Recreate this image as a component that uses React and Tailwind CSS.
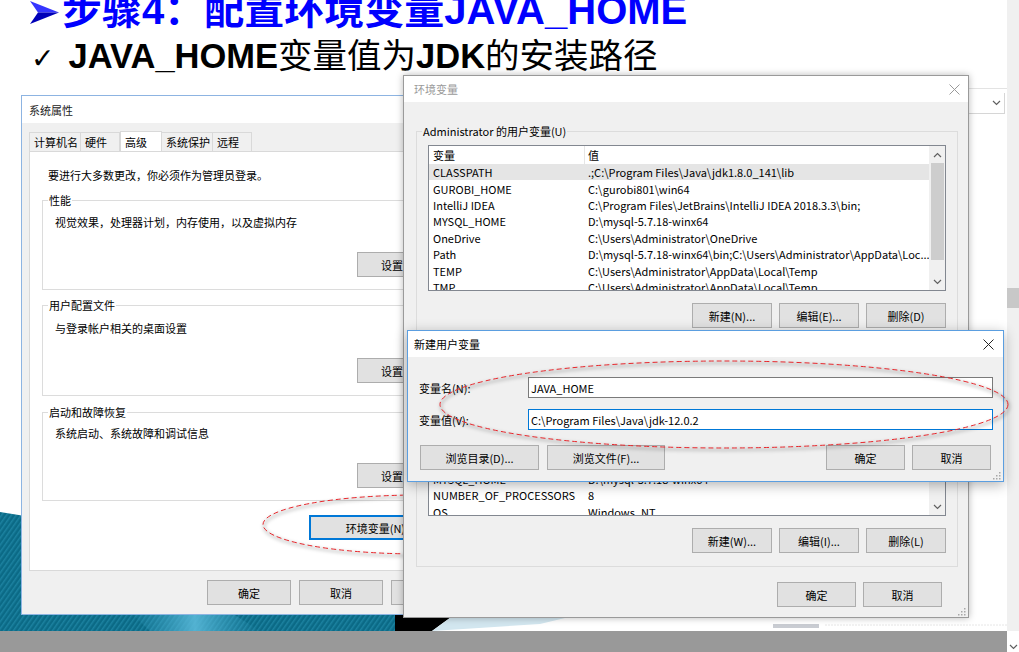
import React from "react";

const UI = "font-['Noto_Sans_CJK_SC','Noto_Sans',sans-serif]";

function Btn({ className = "", focus = false, children }) {
  return (
    <div
      className={`flex h-[25px] shrink-0 items-center justify-center whitespace-nowrap bg-[#e1e1e1] text-[11px] leading-[16px] text-black ${
        focus ? "border-2 border-[#0078d7]" : "border border-[#adadad]"
      } ${className}`}
    >
      {children}
    </div>
  );
}

function CloseX({ color = "#222" }) {
  return (
    <svg width="11" height="11" viewBox="0 0 11 11">
      <path d="M0.5 0.5 L10.5 10.5 M10.5 0.5 L0.5 10.5" stroke={color} strokeWidth="1" fill="none" />
    </svg>
  );
}

function Chevron({ up = false }) {
  return (
    <svg width="9" height="6" viewBox="0 0 9 6">
      <path
        d={up ? "M1 5 L4.5 1.5 L8 5" : "M1 1 L4.5 4.5 L8 1"}
        stroke="#606060"
        strokeWidth="1.2"
        fill="none"
      />
    </svg>
  );
}

function Grip() {
  return (
    <svg width="8" height="8" viewBox="0 0 8 8" fill="#a8a8a8">
      <rect x="6" y="0" width="1.5" height="1.5" />
      <rect x="3" y="3" width="1.5" height="1.5" />
      <rect x="6" y="3" width="1.5" height="1.5" />
      <rect x="0" y="6" width="1.5" height="1.5" />
      <rect x="3" y="6" width="1.5" height="1.5" />
      <rect x="6" y="6" width="1.5" height="1.5" />
    </svg>
  );
}

function ArrowBullet() {
  return (
    <svg width="29" height="23" viewBox="0 0 29 23" className="mr-[3px] shrink-0">
      <polygon points="0,0 29,11.5 8,11.5" fill="#3535ff" />
      <polygon points="8,11.5 29,11.5 0,23" fill="#0000b8" />
    </svg>
  );
}

const userVars = [
  ["CLASSPATH", ".;C:\\Program Files\\Java\\jdk1.8.0_141\\lib"],
  ["GUROBI_HOME", "C:\\gurobi801\\win64"],
  ["IntelliJ IDEA", "C:\\Program Files\\JetBrains\\IntelliJ IDEA 2018.3.3\\bin;"],
  ["MYSQL_HOME", "D:\\mysql-5.7.18-winx64"],
  ["OneDrive", "C:\\Users\\Administrator\\OneDrive"],
  ["Path", "D:\\mysql-5.7.18-winx64\\bin;C:\\Users\\Administrator\\AppData\\Loc..."],
  ["TEMP", "C:\\Users\\Administrator\\AppData\\Local\\Temp"],
  ["TMP", "C:\\Users\\Administrator\\AppData\\Local\\Temp"],
];

const sysVars = [
  ["MYSQL_HOME", "D:\\mysql-5.7.18-winx64"],
  ["NUMBER_OF_PROCESSORS", "8"],
  ["OS", "Windows_NT"],
];

function Row({ name, value, selected }) {
  return (
    <div
      className={`flex h-[16.4px] shrink-0 items-center whitespace-nowrap text-[11px] leading-[16px] ${
        selected ? "bg-[#e5e5e5]" : ""
      }`}
    >
      <div className="w-[156px] shrink-0 overflow-hidden pl-[4px]">{name}</div>
      <div className="min-w-0 flex-1 overflow-hidden pl-[3px]">{value}</div>
    </div>
  );
}

function GroupBox({ legend, className = "", children }) {
  return (
    <fieldset className={`min-w-0 border border-[#dcdcdc] ${className}`}>
      <legend className="ml-[5px] h-[16px] px-[1px] text-[11px] leading-[16px]">{legend}</legend>
      {children}
    </fieldset>
  );
}

function Tab({ className = "", children }) {
  return (
    <div className={`flex items-center whitespace-nowrap border border-b-0 border-[#d9d9d9] ${className}`}>
      {children}
    </div>
  );
}

function SystemProps() {
  return (
    <div className={`absolute left-[21px] top-[95px] flex h-[520px] w-[462px] flex-col border border-[#8db4e2] bg-[#f0f0f0] ${UI}`}>
      <div className="flex h-[27px] shrink-0 items-center bg-white pl-[7px] text-[11px] leading-[16px] text-[#222]">
        系统属性
      </div>
      <div className="flex flex-1 flex-col px-[7px] pt-[8px]">
        <div className="flex h-[20px] items-end text-[11px] leading-[16px]">
          <Tab className="h-[19px] w-[52px] pl-[4px]">计算机名</Tab>
          <Tab className="h-[19px] w-[39px] border-l-0 pl-[4px]">硬件</Tab>
          <Tab className="h-[20px] w-[42px] bg-white pl-[4px]">高级</Tab>
          <Tab className="h-[19px] w-[51px] border-l-0 pl-[4px]">系统保护</Tab>
          <Tab className="h-[19px] w-[39px] border-l-0 pl-[4px]">远程</Tab>
        </div>
        <div className="flex h-[420px] flex-col border border-[#d9d9d9] bg-white px-[12px]">
          <div className="mt-[15px] pl-[6px] text-[11px] leading-[16px]">要进行大多数更改，你必须作为管理员登录。</div>
          <GroupBox legend="性能" className="mt-[9px] h-[98px]">
            <div className="mt-[6px] pl-[12px] text-[11px] leading-[16px]">视觉效果，处理器计划，内存使用，以及虚拟内存</div>
            <div className="mr-[11px] mt-[22px] flex justify-end">
              <Btn className="w-[93px]">设置(S)...</Btn>
            </div>
          </GroupBox>
          <GroupBox legend="用户配置文件" className="mt-[7px] h-[99px]">
            <div className="mt-[7px] pl-[12px] text-[11px] leading-[16px]">与登录帐户相关的桌面设置</div>
            <div className="mr-[11px] mt-[22px] flex justify-end">
              <Btn className="w-[93px]">设置(E)...</Btn>
            </div>
          </GroupBox>
          <GroupBox legend="启动和故障恢复" className="mt-[8px] h-[97px]">
            <div className="mt-[5px] pl-[12px] text-[11px] leading-[16px]">系统启动、系统故障和调试信息</div>
            <div className="mr-[11px] mt-[22px] flex justify-end">
              <Btn className="w-[93px]">设置(T)...</Btn>
            </div>
          </GroupBox>
          <div className="mr-[11px] mt-[14px] flex justify-end">
            <Btn focus className="h-[25px] w-[142px]">环境变量(N)...</Btn>
          </div>
        </div>
        <div className="mt-[9px] flex justify-end gap-[8px]">
          <Btn className="w-[84px]">确定</Btn>
          <Btn className="w-[84px]">取消</Btn>
          <Btn className="w-[84px] text-[#8a8a8a]">应用(A)</Btn>
        </div>
      </div>
    </div>
  );
}

function ScrollBar({ thumb }) {
  return (
    <div className="flex w-[16px] shrink-0 flex-col items-center bg-[#f0f0f0]">
      <div className="flex h-[17px] items-center">
        <Chevron up />
      </div>
      <div className={`w-[13px] bg-[#cdcdcd] ${thumb}`} />
      <div className="flex-1" />
      <div className="flex h-[17px] items-center">
        <Chevron />
      </div>
    </div>
  );
}

function EnvVars() {
  return (
    <div className={`absolute left-[403px] top-[75px] flex h-[543px] w-[566px] flex-col border border-[#9a9a9a] bg-[#f0f0f0] shadow-[0_0_7px_rgba(0,0,0,0.28)] ${UI}`}>
      <div className="flex h-[26px] shrink-0 items-center justify-between bg-white pl-[10px] pr-[8px] text-[11px] leading-[16px] text-[#9a9a9a]">
        <span>环境变量</span>
        <CloseX color="#9a9a9a" />
      </div>
      <div className="flex flex-1 flex-col pl-[12px] pr-[10px]">
        <GroupBox legend="Administrator 的用户变量(U)" className="mt-[21px] h-[216px]">
          <div className="px-[11px]">
            <div className="mt-[6px] flex h-[146px] overflow-hidden border border-[#828790] bg-white">
              <div className="min-w-0 flex-1">
                <div className="flex h-[18px] items-center text-[11px] leading-[16px]">
                  <div className="flex h-full w-[156px] items-center border-r border-[#e5e5e5] pl-[4px]">变量</div>
                  <div className="pl-[3px]">值</div>
                </div>
                {userVars.map((r, i) => (
                  <Row key={r[0]} name={r[0]} value={r[1]} selected={i === 0} />
                ))}
              </div>
              <ScrollBar thumb="h-[97px]" />
            </div>
            <div className="mt-[12px] flex justify-end gap-[7px]">
              <Btn className="w-[80px]">新建(N)...</Btn>
              <Btn className="w-[80px]">编辑(E)...</Btn>
              <Btn className="w-[80px]">删除(D)</Btn>
            </div>
          </div>
        </GroupBox>
        {/* system variables (mostly hidden behind the new-variable dialog) */}
        <GroupBox legend="" className="mt-[8px] h-[220px]">
          <div className="px-[11px]">
            <div className="mt-[6px] flex h-[147px] overflow-hidden border border-[#828790] bg-white">
              <div className="flex min-w-0 flex-1 flex-col justify-end overflow-hidden">
                <div className="-mb-[5px] flex flex-col">
                  {sysVars.map((r) => (
                    <Row key={r[0]} name={r[0]} value={r[1]} />
                  ))}
                </div>
              </div>
              <ScrollBar thumb="h-[40px]" />
            </div>
            <div className="mt-[12px] flex justify-end gap-[7px]">
              <Btn className="w-[80px]">新建(W)...</Btn>
              <Btn className="w-[80px]">编辑(I)...</Btn>
              <Btn className="w-[80px]">删除(L)</Btn>
            </div>
          </div>
        </GroupBox>
        <div className="mr-[16px] mt-[15px] flex justify-end gap-[7px]">
          <Btn className="w-[79px]">确定</Btn>
          <Btn className="w-[79px]">取消</Btn>
        </div>
        <div className="mt-auto flex justify-end pb-[1px]">
          <div className="-mr-[8px]">
            <Grip />
          </div>
        </div>
      </div>
    </div>
  );
}

function NewVar() {
  return (
    <div className={`absolute left-[407px] top-[330px] flex h-[152px] w-[597px] flex-col border border-[#5b9ee0] bg-[#f0f0f0] shadow-[0_3px_12px_rgba(0,0,0,0.3)] ${UI}`}>
      <div className="flex h-[26px] shrink-0 items-center justify-between bg-white pl-[6px] pr-[9px] text-[11px] leading-[16px] text-black">
        <span>新建用户变量</span>
        <CloseX />
      </div>
      <div className="flex flex-1 flex-col pl-[11px] pr-[10px] pt-[20px] text-[11px] leading-[16px]">
        <div className="flex h-[21px] items-center">
          <div className="w-[109px] shrink-0">变量名(N):</div>
          <div className="flex h-[21px] flex-1 items-center border border-[#7a7a7a] bg-white pl-[2px]">JAVA_HOME</div>
        </div>
        <div className="mt-[11px] flex h-[21px] items-center">
          <div className="w-[109px] shrink-0">变量值(V):</div>
          <div className="flex h-[21px] flex-1 items-center border border-[#0078d7] bg-white pl-[2px]">C:\Program Files\Java\jdk-12.0.2</div>
        </div>
        <div className="ml-[1px] mr-[2px] mt-[15px] flex">
          <Btn className="h-[24px] w-[119px]">浏览目录(D)...</Btn>
          <Btn className="ml-[8px] h-[24px] w-[118px]">浏览文件(F)...</Btn>
          <div className="flex-1" />
          <Btn className="h-[24px] w-[79px]">确定</Btn>
          <Btn className="ml-[7px] h-[24px] w-[79px]">取消</Btn>
        </div>
        <div className="mt-auto flex justify-end pb-[1px]">
          <div className="-mr-[8px]">
            <Grip />
          </div>
        </div>
      </div>
    </div>
  );
}

function SlideDecor() {
  return (
    <svg className="absolute left-0 top-[505px]" width="1007" height="126" viewBox="0 505 1007 126">
      <defs>
        <pattern id="stripes" width="4" height="4" patternUnits="userSpaceOnUse" patternTransform="rotate(35)">
          <rect width="4" height="4" fill="#0b6a86" />
          <rect width="1.5" height="4" fill="#1c82a0" />
        </pattern>
        <linearGradient id="band" x1="0" x2="1" y1="0" y2="0">
          <stop offset="0" stopColor="#3aa3c6" stopOpacity="0" />
          <stop offset="0.5" stopColor="#5ab9d9" stopOpacity="0.9" />
          <stop offset="1" stopColor="#3aa3c6" stopOpacity="0" />
        </linearGradient>
      </defs>
      <polygon points="0,512 25,516 400,516 400,631 0,631" fill="url(#stripes)" />
      <polygon points="130,612 230,612 260,631 150,631" fill="url(#band)" />
      <polygon points="395,612 458,612 432,631 395,631" fill="#000" />
      <polygon points="458,612 590,612 540,624 432,631" fill="#d2e6ef" />
      <rect x="773" y="624" width="46" height="4" fill="#c9ccd2" />
      <line x1="825" y1="625" x2="1007" y2="625" stroke="#e6e6e6" strokeDasharray="2 1" />
    </svg>
  );
}

export default function App() {
  return (
    <div className={`relative flex h-[652px] w-[1019px] overflow-hidden bg-white ${UI}`}>
      <div className="flex min-w-0 flex-1 flex-col">
        <div className="-mt-[12px] flex h-[44px] items-baseline whitespace-nowrap pl-[30px] font-['Liberation_Sans','Noto_Sans_CJK_SC',sans-serif] text-[40px] font-bold leading-[44px] text-[#0000ff]">
          <ArrowBullet />
          <span>步骤4：配置环境变量JAVA_HOME</span>
        </div>
        <div className="mt-[2px] flex h-[38px] items-baseline whitespace-nowrap pl-[31px] font-['Liberation_Sans','Noto_Sans_CJK_SC',sans-serif] text-[34.5px] leading-[38px] text-black">
          <span className="mr-[14px] font-['DejaVu_Sans',sans-serif] text-[28px] font-bold">✓</span>
          <span className="font-bold">JAVA_HOME</span>
          <span className="font-['Noto_Sans_CJK_SC',sans-serif] font-normal">变量值为</span>
          <span className="font-bold">JDK</span>
          <span className="font-['Noto_Sans_CJK_SC',sans-serif] font-normal">的安装路径</span>
        </div>
        <div className="flex-1" />
        <div className="h-[21px] bg-[#999999]" />
      </div>
      <div className="flex w-[12px] shrink-0 flex-col">
        <div className="flex-1 bg-[#f0f0f0] pt-[288px]">
          <div className="h-[20px] bg-[#c8c8c8]" />
        </div>
        <div className="flex h-[21px] items-end justify-center bg-white pb-[2px]">
          <Chevron />
        </div>
      </div>

      <SlideDecor />

      <div className="absolute left-[940px] top-[88px] flex w-[67px] flex-col">
        <div className="h-px bg-[#e3e3e3]" />
        <div className="mr-[2px] mt-[4px] flex h-[21px] items-center justify-end border-b border-r border-[#d6d6d6] bg-white pr-[3px]">
          <Chevron />
        </div>
      </div>

      <SystemProps />

      <svg className="pointer-events-none absolute left-0 top-0" width="1019" height="652">
        <defs>
          <filter id="blur">
            <feGaussianBlur stdDeviation="1.5" />
          </filter>
        </defs>
        <ellipse cx={421} cy={526.5} rx={157} ry={29.5} fill="none" stroke="rgba(0,0,0,0.12)" strokeWidth="4" filter="url(#blur)" />
        <ellipse cx={420} cy={524.5} rx={157} ry={29.5} fill="none" stroke="#e8262b" strokeWidth="1" strokeDasharray="5 3" />
      </svg>

      <EnvVars />
      <NewVar />

      <svg className="pointer-events-none absolute left-0 top-0" width="1019" height="652">
        <defs>
          <filter id="blur2">
            <feGaussianBlur stdDeviation="1.5" />
          </filter>
        </defs>
        <ellipse cx={725} cy={406.5} rx={284} ry={43.5} fill="none" stroke="rgba(0,0,0,0.12)" strokeWidth="4" filter="url(#blur2)" />
        <ellipse cx={724} cy={404.5} rx={284} ry={43.5} fill="none" stroke="#e8262b" strokeWidth="1" strokeDasharray="5 3" />
      </svg>
    </div>
  );
}
